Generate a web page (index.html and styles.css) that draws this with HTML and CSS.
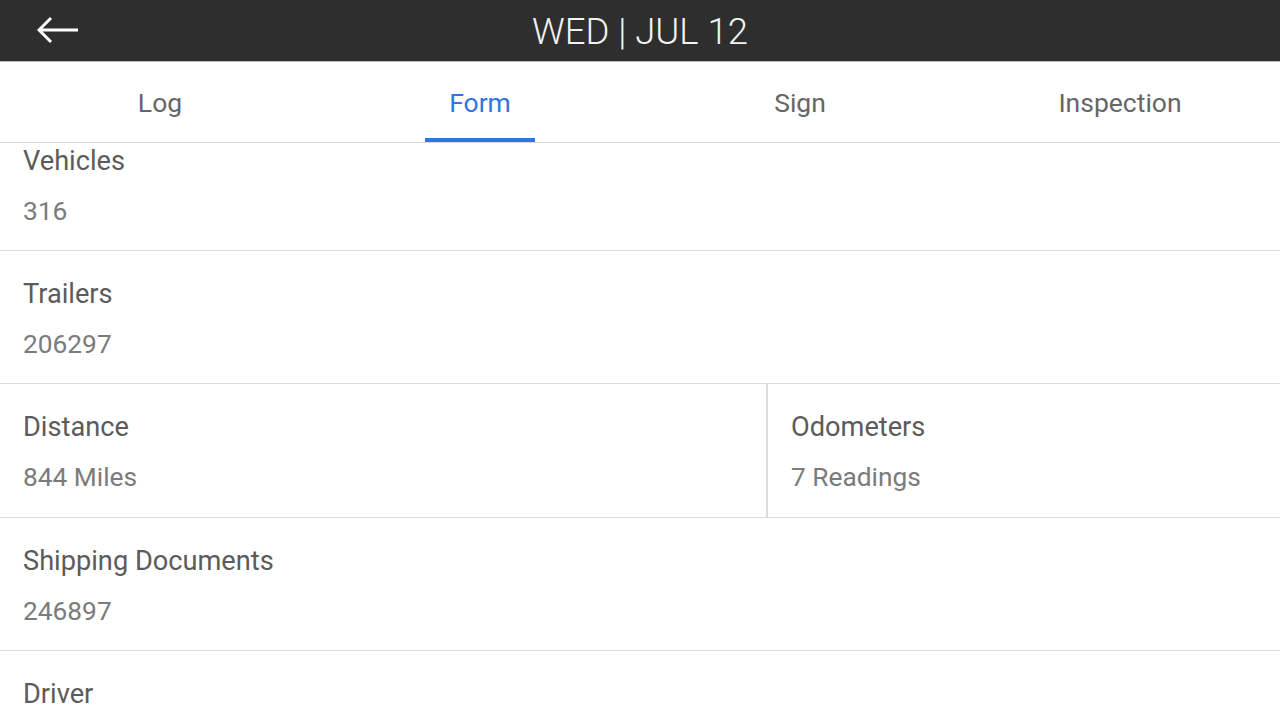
FILE: index.html
```html
<!DOCTYPE html>
<html>
<head>
<meta charset="utf-8">
<link rel="stylesheet" href="styles.css">
</head>
<body>
<div class="app">
  <header class="topbar">
    <span class="back">
      <svg width="44" height="28" viewBox="0 0 44 28"><path d="M41 14H2M14 2L2 14l12 12" fill="none" stroke="#fff" stroke-width="3" stroke-linecap="butt" stroke-linejoin="miter"/></svg>
    </span>
    <h1 class="title">WED | JUL 12</h1>
  </header>
  <nav class="tabs">
    <div class="tab">Log</div>
    <div class="tab active">Form</div>
    <div class="tab">Sign</div>
    <div class="tab">Inspection</div>
  </nav>
  <main class="content">
    <div class="list">
      <div class="row"><div class="cell"><div class="label">Vehicles</div><div class="value">316</div></div></div>
      <div class="row"><div class="cell"><div class="label">Trailers</div><div class="value">206297</div></div></div>
      <div class="row split">
        <div class="cell left"><div class="label">Distance</div><div class="value">844 Miles</div></div>
        <div class="cell right"><div class="label">Odometers</div><div class="value">7 Readings</div></div>
      </div>
      <div class="row"><div class="cell"><div class="label">Shipping Documents</div><div class="value">246897</div></div></div>
      <div class="row"><div class="cell"><div class="label">Driver</div></div></div>
    </div>
  </main>
</div>
</body>
</html>
```
FILE: styles.css
```css
* { box-sizing: border-box; }
html, body { margin: 0; padding: 0; background: #fff; }
body { font-family: Roboto, "Noto Sans", sans-serif; }
.app { width: 1280px; height: 719px; overflow: hidden; display: flex; flex-direction: column; }
.topbar {
  height: 62px; flex: 0 0 62px;
  background: #2e2e2e;
  border-bottom: 1px solid #bdbdbd;
  position: relative;
  display: flex; align-items: center; justify-content: center;
}
.back { position: absolute; left: 37px; top: 16px; display: flex; }
.title {
  margin: 0; font-weight: 300; font-size: 36.5px; color: #f2f2f2;
  letter-spacing: 0; line-height: 1; padding-top: 4px;
}
.tabs {
  display: flex; height: 81px; flex: 0 0 81px;
  border-bottom: 1px solid #dcdcdc;
}
.tab {
  flex: 1; display: flex; align-items: center; justify-content: center;
  font-size: 26.5px; color: #666; position: relative; padding-top: 1px;
}
.tab.active { color: #2f76e0; }
.tab.active::after {
  content: ""; position: absolute; bottom: 0; left: 50%;
  width: 110px; margin-left: -55px; height: 4px; background: #2f76e0;
}
.content { flex: 1; overflow: hidden; }
.list { margin-top: -25px; }
.row { display: flex; border-bottom: 1px solid #dcdcdc; height: 133px; }
.row.split { height: 134px; }
.cell { flex: 1; padding: 28px 24px 0 23px; }
.split .left { flex: 0 0 766px; }
.split .right { border-left: 2px solid #dcdcdc; padding-left: 23px; }
.label { font-size: 27.2px; line-height: 30px; color: #5b5b5b; font-weight: 400; }
.value { font-size: 26.3px; line-height: 30px; color: #7b7b7b; margin-top: 20px; }
```
